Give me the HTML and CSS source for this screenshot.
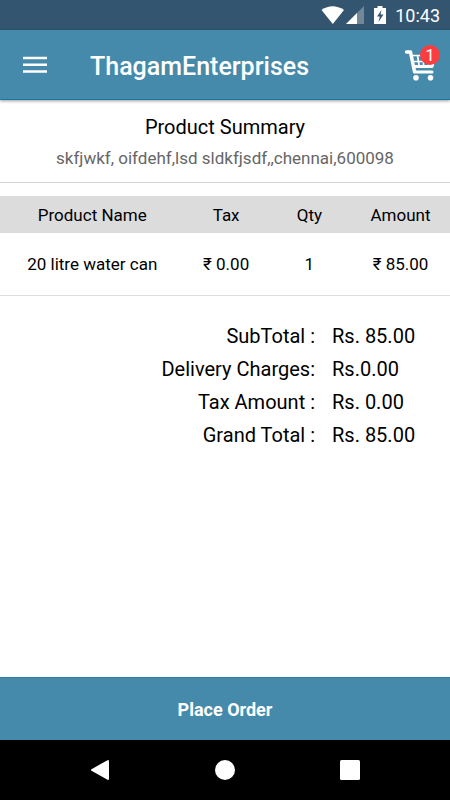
FILE: index.html
```html
<!DOCTYPE html>
<html lang="en">
<head>
<meta charset="utf-8">
<meta name="viewport" content="width=device-width, initial-scale=1">
<title>Product Summary</title>
<link rel="stylesheet" href="styles.css">
</head>
<body>
<div class="statusbar">
  <svg class="status-icons" width="66" height="20" viewBox="0 0 66 20" aria-hidden="true">
    <path fill="#fff" d="M1.500 5Q12.500 -2.500 24 5L12.800 19Z"/>
    <path fill="#fff" fill-opacity=".3" d="M44 1V19H26Z"/>
    <path fill="#fff" d="M37 8V19H26Z"/>
    <path fill="#fff" fill-rule="evenodd" d="M54 3h3.500V1h5v2H66v16H54ZM61.500 5L57 11.500H59.800L58.500 17L63.500 9.500H60.500Z"/>
  </svg>
  <time>10:43</time>
</div>
<header class="appbar">
  <button class="icon-button" aria-label="Menu">
    <svg width="24" height="18" viewBox="0 0 24 18"><path stroke="#fff" stroke-width="2.500" d="M0 1.900H24M0 8.700H24M0 15.500H24"/></svg>
  </button>
  <h1>ThagamEnterprises</h1>
  <button class="icon-button cart" aria-label="Cart">
    <svg width="32" height="32" viewBox="0 0 32 32" fill="none" stroke="#fff">
      <path stroke-width="3.500" stroke-linecap="round" stroke-linejoin="round" d="M2.500 3H6.500L10.500 22.500"/>
      <path stroke-width="3" stroke-linecap="round" d="M10.500 23H28"/>
      <path stroke-width="1.700" d="M7.500 6.500H28M8.500 12.500H28M13.500 6.500L15.200 17M19.500 6.500V17M25 6.500V17"/>
      <path stroke-width="3" stroke-linecap="round" stroke-linejoin="round" d="M10 17.500H28L30 10"/>
      <circle cx="12" cy="28.800" r="2.800" fill="#fff" stroke="none"/>
      <circle cx="26.500" cy="28.800" r="2.800" fill="#fff" stroke="none"/>
    </svg>
    <span class="badge">1</span>
  </button>
</header>
<main>
  <section class="summary">
    <h2>Product Summary</h2>
    <p>skfjwkf, oifdehf,lsd sldkfjsdf,,chennai,600098</p>
  </section>
  <table class="items">
    <thead>
      <tr><th class="name">Product Name</th><th>Tax</th><th>Qty</th><th class="amount">Amount</th></tr>
    </thead>
    <tbody>
      <tr><td>20 litre water can</td><td>₹ 0.00</td><td>1</td><td>₹ 85.00</td></tr>
    </tbody>
  </table>
  <dl class="totals">
    <dt>SubTotal :</dt><dd>Rs. 85.00</dd>
    <dt>Delivery Charges:</dt><dd>Rs.0.00</dd>
    <dt>Tax Amount :</dt><dd>Rs. 0.00</dd>
    <dt>Grand Total :</dt><dd>Rs. 85.00</dd>
  </dl>
</main>
<button class="order">Place Order</button>
<nav class="navbar">
  <button aria-label="Back"><svg width="20" height="22" viewBox="0 0 20 22"><path fill="#fff" stroke="#fff" stroke-width="2" stroke-linejoin="round" d="M2 11L18 2V20Z"/></svg></button>
  <button aria-label="Home"><svg width="20" height="20" viewBox="0 0 20 20"><circle cx="10" cy="10" r="10" fill="#fff"/></svg></button>
  <button aria-label="Recent apps"><svg width="20" height="20" viewBox="0 0 20 20"><rect width="20" height="20" rx="1.500" fill="#fff"/></svg></button>
</nav>
</body>
</html>
```
FILE: styles.css
```css
* {
  box-sizing: border-box;
}

body {
  margin: 0;
  min-height: 100vh;
  display: flex;
  flex-direction: column;
  background: #fff;
  color: #000;
  font-family: Roboto, "Noto Sans", sans-serif;
}

h1, h2, p, dl, dd {
  margin: 0;
  font-weight: 400;
}

button {
  padding: 0;
  border: 0;
  background: none;
  color: #fff;
  font-family: inherit;
}

svg {
  display: block;
}

.statusbar {
  height: 30px;
  padding: 0 10px;
  display: flex;
  align-items: center;
  justify-content: flex-end;
  gap: 9px;
  background: #34556f;
  color: #fff;
  font-size: 18px;
}

.appbar {
  height: 70px;
  padding: 0 14px 0 23px;
  display: flex;
  align-items: center;
  background: #458aab;
  border-bottom: 1px solid #197a9f;
  box-shadow: 0 1px 3px rgba(0, 0, 0, 0.4);
}

.appbar h1 {
  flex: 1;
  padding-top: 4px;
  margin-left: 43px;
  color: #fff;
  font-size: 25px;
  font-weight: 500;
  line-height: 32px;
}

.cart {
  position: relative;
}

.badge {
  position: absolute;
  top: -4px;
  right: -4px;
  width: 20px;
  height: 20px;
  border-radius: 50%;
  background: #fc3d40;
  font-size: 17px;
  line-height: 20px;
  text-align: center;
}

main {
  flex: 1;
}

.summary {
  padding: 12px 12px 8px;
  border-bottom: 1px solid #d5d5d5;
  text-align: center;
}

.summary h2 {
  font-size: 20px;
  line-height: 30px;
}

.summary p {
  color: #666;
  font-size: 17px;
  line-height: 32px;
}

.items {
  width: 100%;
  margin-top: 13px;
  table-layout: fixed;
  border-collapse: collapse;
  border-bottom: 1px solid #ddd;
  font-size: 17px;
  text-align: center;
}

.items th {
  height: 37px;
  padding: 0;
  background: #dcdcdc;
  font-weight: 400;
}

.items td {
  height: 62px;
  padding: 0;
}

.items .name {
  width: 41%;
}

.items .amount {
  width: 22%;
}

.totals {
  margin-top: 24px;
  display: grid;
  grid-template-columns: 70% 1fr;
  column-gap: 17px;
  font-size: 20px;
  line-height: 33px;
}

.totals dt {
  text-align: right;
}

.order {
  height: 63px;
  border-top: 1px solid #2e7fa5;
  background: #458aab;
  font-size: 18px;
  font-weight: 700;
}

.navbar {
  height: 60px;
  padding: 0 90px;
  display: flex;
  align-items: center;
  justify-content: space-between;
  background: #000;
}
```
